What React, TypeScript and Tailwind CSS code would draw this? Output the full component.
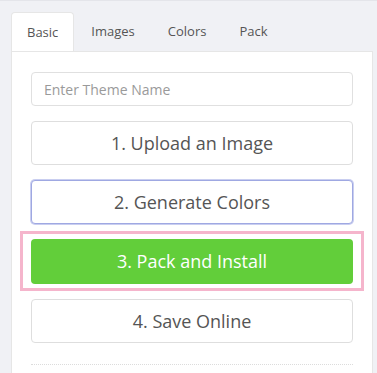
import React from 'react'

const tabs = ['Basic', 'Images', 'Colors', 'Pack']

// plain outlined step button
function StepButton({ label, className = '' }: { label: string; className?: string }) {
  return (
    <button
      className={`flex h-[44px] w-full items-center justify-center rounded-[4px] border border-[#dedede] bg-white text-[18px] text-[#555] ${className}`}
    >
      {label}
    </button>
  )
}

export default function App() {
  return (
    <div
      className="h-[373px] w-[377px] overflow-hidden border-t border-[#e4e5ea] bg-[#f0f1f5] pl-[11px] pt-[11px]"
      style={{ fontFamily: '"Open Sans", "Liberation Sans", sans-serif' }}
    >
      {/* tabs */}
      <div className="flex h-[39px] items-stretch gap-[1px]">
        {tabs.map((t, i) => (
          <div
            key={t}
            className={`flex items-center px-[15px] pt-[1px] text-[13px] text-[#555] ${
              i === 0 ? 'rounded-t-[4px] border border-b-0 border-[#e6e6e6] bg-white' : 'border border-transparent'
            }`}
          >
            {t}
          </div>
        ))}
      </div>

      {/* panel */}
      <div className="h-[330px] w-[362px] border border-[#e6e6e6] bg-white px-[19px] pt-[20px]">
        <input
          placeholder="Enter Theme Name"
          className="h-[34px] w-full rounded-[4px] border border-[#e0e0e0] px-[12px] text-[14px] text-[#555] placeholder:text-[#9a9a9a] outline-none"
        />

        <StepButton label="1. Upload an Image" className="mt-[15px]" />

        <StepButton
          label="2. Generate Colors"
          className="mt-[15px] !border-[#9fa8e2] shadow-[0_0_0_1px_#c9cef0]"
        />

        <div className="mx-[-11px] mt-[7px] border-[3px] border-[#f5b5cc] px-[8px] pb-[4px] pt-[5px]">
          <button className="flex h-[45px] w-full items-center justify-center rounded-[4px] bg-[#62ce3a] text-[18px] text-white">
            3. Pack and Install
          </button>
        </div>

        <StepButton label="4. Save Online" className="mt-[8px]" />

        <div className="mt-[21px] border-t border-dotted border-[#dcdcdc]" />
      </div>
    </div>
  )
}
